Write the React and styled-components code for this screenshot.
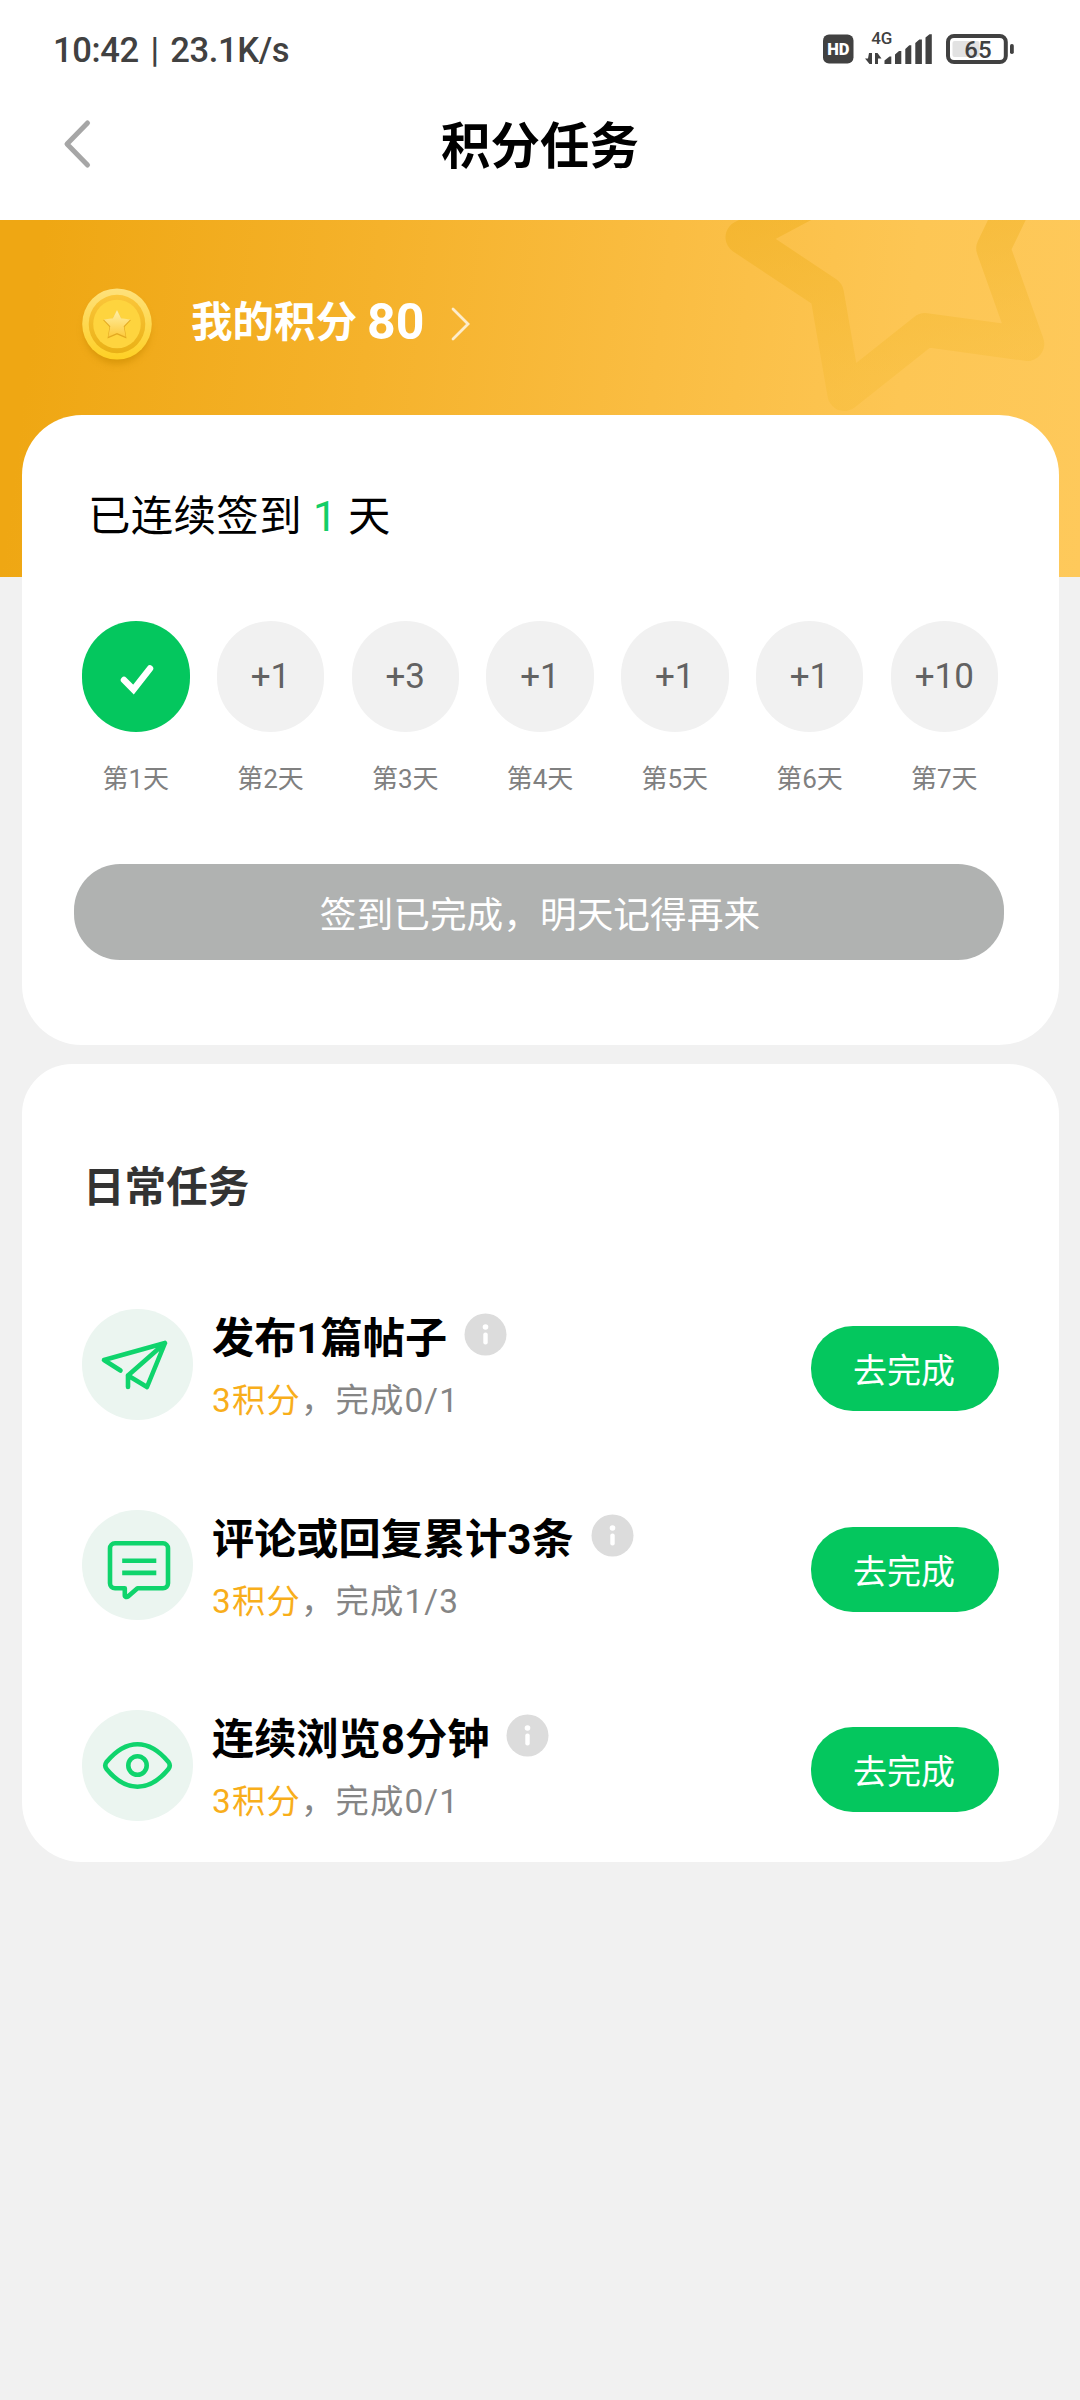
import styled, { createGlobalStyle } from 'styled-components';

// DATA
const days = [
  { label: '第1天', done: true },
  { label: '第2天', reward: '+1' },
  { label: '第3天', reward: '+3' },
  { label: '第4天', reward: '+1' },
  { label: '第5天', reward: '+1' },
  { label: '第6天', reward: '+1' },
  { label: '第7天', reward: '+10' },
];

const tasks = [
  { icon: 'plane', title: '发布1篇帖子', points: '3积分', progress: '，完成0/1' },
  { icon: 'comment', title: '评论或回复累计3条', points: '3积分', progress: '，完成1/3' },
  { icon: 'eye', title: '连续浏览8分钟', points: '3积分', progress: '，完成0/1' },
];

// STYLES
const GlobalStyle = createGlobalStyle`
  * {
    box-sizing: border-box;
  }

  body {
    margin: 0;
    background: #f1f1f1;
    font-family: Roboto, 'Noto Sans CJK SC', sans-serif;
  }
`;

const Page = styled.div`
  width: 1080px;
  min-height: 2400px;
  background: #f1f1f1;
`;

const StatusBar = styled.div`
  display: flex;
  align-items: center;
  height: 98px;
  padding: 0 64px 0 53px;
  background: white;
  color: #414141;
`;

const Clock = styled.span`
  flex: 1;
  margin-top: 2px;
  font-size: 34.6px;
  font-weight: 500;
  line-height: 40px;
  letter-spacing: -0.4px;
  word-spacing: 3.5px;
  white-space: pre;
`;

const NavBar = styled.div`
  display: grid;
  grid-template-columns: 160px 1fr 160px;
  align-items: center;
  height: 122px;
  padding-bottom: 27px;
  background: white;
`;

const BackButton = styled.div`
  display: flex;
  padding: 0 0 4px 63px;
`;

const PageTitle = styled.h1`
  margin: 2px 0 0;
  font-size: 49.5px;
  font-weight: 700;
  line-height: 60px;
  text-align: center;
  color: black;
`;

const Banner = styled.div`
  position: relative;
  height: 357px;
  background: linear-gradient(97deg, #efa713 4%, #f5b22b 34%, #fabd42 60%, #fdc654 82%, #fec95b 100%);
`;

const BannerStar = styled.svg`
  position: absolute;
  top: 0;
  right: 0;
`;

const PointsRow = styled.div`
  display: flex;
  align-items: center;
  height: 195px;
  padding: 17px 0 0 72px;
  color: white;
`;

const PointsLabel = styled.span`
  margin: -7px 0 0 19px;
  font-size: 41.5px;
  font-weight: 700;
  line-height: 60px;
`;

const PointsValue = styled.span`
  margin: -9px 26px 0 10px;
  font-size: 50px;
  font-weight: 700;
  line-height: 60px;
`;

const Chevron = styled.svg`
  margin-top: -5px;
`;

const Card = styled.section`
  position: relative;
  width: 1037px;
  height: ${(props) => props.$h}px;
  margin: ${(props) => props.$top}px 0 0 22px;
  padding: ${(props) => props.$pad};
  border-radius: ${(props) => props.$radius};
  background: white;
`;

const Streak = styled.div`
  padding-left: 6px;
  font-size: 42.4px;
  line-height: 60px;
  letter-spacing: 0.4px;
  color: black;
  white-space: pre;

  em {
    font-style: normal;
    color: #13ce66;
  }
`;

const Days = styled.div`
  display: flex;
  justify-content: space-between;
  margin-top: 74px;
`;

const Day = styled.div`
  display: flex;
  flex-direction: column;
  align-items: center;
  width: 107.5px;
`;

const DayCircle = styled.div`
  display: flex;
  justify-content: center;
  align-items: center;
  width: 107.5px;
  height: 111px;
  border-radius: 54px;
  background: ${(props) => (props.$done ? '#04c75e' : '#f1f1f1')};
  color: #626262;
  font-size: 35px;
`;

const CheckMark = styled.svg`
  margin: 4px 0 0 2px;
`;

const DayLabel = styled.span`
  margin-top: 27px;
  font-size: 26px;
  line-height: 40px;
  color: #808080;
`;

const SignButton = styled.div`
  display: flex;
  justify-content: center;
  align-items: center;
  height: 96px;
  margin: 65px -6px 0 -8px;
  padding-left: 2px;
  border-radius: 46px;
  background: #b0b2b1;
  color: white;
  font-size: 36.7px;
`;

const SectionTitle = styled.h2`
  margin: 0 0 91px;
  padding-left: 1px;
  font-size: 41.6px;
  font-weight: 700;
  line-height: 60px;
  color: #333;
`;

const TaskRow = styled.div`
  display: flex;
  height: 110px;
  margin-bottom: 90.7px;
`;

const TaskIcon = styled.div`
  width: 110.5px;
  height: 110.5px;
  border-radius: 50%;
  background: #ebf5f0;
`;

const TaskBody = styled.div`
  flex: 1;
  margin-top: -2.5px;
  padding-left: 19.5px;
`;

const TaskTitle = styled.div`
  display: flex;
  align-items: center;
  gap: 17px;
  height: 56px;
  font-size: 42.2px;
  font-weight: 700;
  color: black;
`;

const TaskMeta = styled.div`
  height: 50px;
  margin-top: 13.5px;
  font-size: 33.3px;
  line-height: 50px;
  letter-spacing: 1.2px;
  color: #858585;
`;

const TaskPoints = styled.span`
  color: #f8ae1b;
`;

const GoButton = styled.div`
  display: flex;
  justify-content: center;
  align-items: center;
  width: 188px;
  height: 85px;
  margin-top: 17px;
  padding-right: 2px;
  border-radius: 42px;
  background: #04c75e;
  color: white;
  font-size: 34px;
`;

// ICONS
function StatusIcons() {
  return (
    <svg width="200" height="54" viewBox="816 22 200 54" fill="#414141">
      <rect x="823" y="34.5" width="30.5" height="29" rx="6" />
      <text x="838.3" y="55.4" fill="white" fontSize="16.5" fontWeight="900" textAnchor="middle" fontFamily="Roboto">
        HD
      </text>
      <text x="871.2" y="44" fontSize="17" fontWeight="500" fontFamily="Roboto">
        4G
      </text>
      <path d="M869 53h3v11h-2.500l-4.500-5.500h3zM875 64V53h2.500l4 5.500h-3.500V64z" />
      <path d="M884.500 64v-3.500l5-4h1.800V64zM895 64V54.500l4-3.500h2.300v13zM905.300 64V49l4-3.700h2V64zM915.300 64V43l4-3.500h2.600V64zM925.500 64V37.500l4-3.200h2.300V64z" />
      <rect x="952.500" y="41" width="27" height="16" rx="2" fill="#e2e2e2" />
      <rect x="948" y="36" width="57.800" height="26" rx="6" fill="none" stroke="#414141" strokeWidth="4" />
      <rect x="1010" y="44" width="3.800" height="10" rx="1.800" />
      <text x="978" y="58.300" fontSize="24" fontWeight="500" textAnchor="middle" fontFamily="Roboto">
        65
      </text>
    </svg>
  );
}

function Coin() {
  return (
    <svg width="100" height="100" viewBox="0 0 100 100">
      <defs>
        <linearGradient id="rim" x1="0" y1="0" x2="0" y2="1">
          <stop offset="0" stopColor="#fee17c" />
          <stop offset="1" stopColor="#fed024" />
        </linearGradient>
        <linearGradient id="groove" x1="0" y1="0" x2="0" y2="1">
          <stop offset="0" stopColor="#fbc63a" />
          <stop offset="1" stopColor="#e9b016" />
        </linearGradient>
        <linearGradient id="coinStar" x1="0" y1="0" x2="0" y2="1">
          <stop offset="0" stopColor="#fff0a8" />
          <stop offset="1" stopColor="#fdca3c" />
        </linearGradient>
        <filter id="soft" x="-30%" y="-30%" width="160%" height="160%">
          <feGaussianBlur stdDeviation="3.500" />
        </filter>
      </defs>
      <ellipse cx="45" cy="54" rx="33" ry="34" fill="#c98a06" opacity="0.6" filter="url(#soft)" />
      <ellipse cx="45" cy="48" rx="34.800" ry="35.600" fill="url(#rim)" />
      <ellipse cx="45" cy="48" rx="28.300" ry="29.300" fill="url(#groove)" />
      <ellipse cx="45" cy="48" rx="23.800" ry="24.300" fill="#fed43e" />
      <path
        d="M45 34.500l4.500 8.200 9.500 1.300-6.500 7 2 11.500L45 58.500l-9.500 4 2-11.500-6.500-7 9.500-1.300z"
        fill="#e3a921"
      />
      <path
        d="M45 34l4.200 8.200 9 1.300-6.500 6.800 2 10.500L45 57l-8.700 3.800 2-10.500-6.500-6.800 9-1.300z"
        fill="url(#coinStar)"
      />
    </svg>
  );
}

function TaskGlyph({ name }) {
  return (
    <svg
      width="110"
      height="110"
      viewBox="0 0 110 110"
      fill="none"
      stroke="#0fd46c"
      strokeWidth="4.600"
      strokeLinecap="round"
      strokeLinejoin="round"
    >
      {name === 'plane' && (
        <path d="M38.500 61.500L22 51 83 34 65 78 46 66.500V78M46 66.500L83 34" />
      )}
      {name === 'comment' && (
        <>
          <path d="M33 33.300h48a5 5 0 0 1 5 5v35a5 5 0 0 1-5 5H55.500l-9.500 8.200c-1.200 1-3.200.5-3.200-1V78.300H33a5 5 0 0 1-5-5v-35a5 5 0 0 1 5-5z" />
          <path d="M42.500 50.700h29.500M42.500 62.900h29.500" strokeLinecap="square" />
        </>
      )}
      {name === 'eye' && (
        <>
          <path d="M24.500 52C34 40.500 43.500 34.200 55.500 34.200s21.500 6.300 31 17.800q2.500 3.500 0 7C77 70.500 67.500 76.800 55.500 76.800s-21.500-6.300-31-17.800q-2.500-3.500 0-7z" />
          <circle cx="55.500" cy="55.500" r="9.200" />
        </>
      )}
    </svg>
  );
}

function InfoIcon() {
  return (
    <svg width="43" height="43" viewBox="0 0 43 43">
      <circle cx="21.500" cy="21.500" r="21" fill="#dcdcdc" />
      <circle cx="21.500" cy="14" r="2.800" fill="white" />
      <rect x="19.300" y="19.500" width="4.400" height="12" rx="2" fill="white" />
    </svg>
  );
}

function App() {
  return (
    <Page>
      <GlobalStyle />
      <StatusBar>
        <Clock>10:42 | 23.1K/s</Clock>
        <StatusIcons />
      </StatusBar>
      <NavBar>
        <BackButton>
          <svg width="30" height="50" viewBox="0 0 30 50">
            <path d="M24.500 4L4 25l20.500 21" fill="none" stroke="#a6a6a6" strokeWidth="5" strokeLinecap="round" strokeLinejoin="round" />
          </svg>
        </BackButton>
        <PageTitle>积分任务</PageTitle>
      </NavBar>

      <Banner>
        <BannerStar width="380" height="195" viewBox="700 220 380 195">
          <defs>
            <linearGradient id="bannerStar" x1="0" y1="0" x2="0.300" y2="1">
              <stop offset="0" stopColor="#efae20" stopOpacity="0.650" />
              <stop offset="1" stopColor="#f3b92e" stopOpacity="0.320" />
            </linearGradient>
          </defs>
          <path
            d="M850 180L742.500 237.300 826.900 293.300 844.400 394 925 330 1027.300 344 993.200 248.300 1030 172"
            fill="none"
            stroke="url(#bannerStar)"
            strokeWidth="34"
            strokeLinejoin="round"
          />
        </BannerStar>
        <PointsRow>
          <Coin />
          <PointsLabel>我的积分</PointsLabel>
          <PointsValue>80</PointsValue>
          <Chevron width="22" height="36" viewBox="0 0 22 36">
            <path d="M3 3l15 15L3 33" fill="none" stroke="white" strokeOpacity="0.750" strokeWidth="2.800" strokeLinecap="round" />
          </Chevron>
        </PointsRow>
      </Banner>

      <Card $h={630} $top={-162} $pad="72px 61px 0 60px" $radius="60px">
        <Streak>
          已连续签到 <em>1</em> 天
        </Streak>
        <Days>
          {days.map((day) => (
            <Day key={day.label}>
              <DayCircle $done={day.done}>
                {day.done ? (
                  <CheckMark width="40" height="36" viewBox="0 0 40 36">
                    <path d="M7 19l9.500 9.500L33 7.500" fill="none" stroke="white" strokeWidth="6.500" strokeLinecap="round" />
                  </CheckMark>
                ) : (
                  day.reward
                )}
              </DayCircle>
              <DayLabel>{day.label}</DayLabel>
            </Day>
          ))}
        </Days>
        <SignButton>签到已完成，明天记得再来</SignButton>
      </Card>

      <Card $h={798} $top={19} $pad="94px 60px 0 60px" $radius="50px 50px 60px 60px">
        <SectionTitle>日常任务</SectionTitle>
        {tasks.map((task) => (
          <TaskRow key={task.title}>
            <TaskIcon>
              <TaskGlyph name={task.icon} />
            </TaskIcon>
            <TaskBody>
              <TaskTitle>
                {task.title}
                <InfoIcon />
              </TaskTitle>
              <TaskMeta>
                <TaskPoints>{task.points}</TaskPoints>
                {task.progress}
              </TaskMeta>
            </TaskBody>
            <GoButton>去完成</GoButton>
          </TaskRow>
        ))}
      </Card>
    </Page>
  );
}

export default App;
